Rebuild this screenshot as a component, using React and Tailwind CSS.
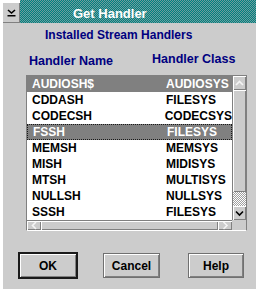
import React from 'react'

const handlers = [
  { name: 'AUDIOSH$', cls: 'AUDIOSYS', selected: true },
  { name: 'CDDASH', cls: 'FILESYS' },
  { name: 'CODECSH', cls: 'CODECSYS' },
  { name: 'FSSH', cls: 'FILESYS', selected: true, focused: true },
  { name: 'MEMSH', cls: 'MEMSYS' },
  { name: 'MISH', cls: 'MIDISYS' },
  { name: 'MTSH', cls: 'MULTISYS' },
  { name: 'NULLSH', cls: 'NULLSYS' },
  { name: 'SSSH', cls: 'FILESYS' },
]

const raised = 'bg-[#cccccc] shadow-[inset_1px_1px_0_#ffffff,inset_-1px_-1px_0_#808080]'

function Chevron({ dir, color = '#000' }) {
  const paths = {
    up: 'M1 5 L4.5 1.5 L8 5',
    down: 'M1 1.5 L4.5 5 L8 1.5',
    left: 'M5 1 L1.5 4.5 L5 8',
    right: 'M1.5 1 L5 4.5 L1.5 8',
  }
  const vertical = dir === 'up' || dir === 'down'
  return (
    <svg width={vertical ? 9 : 7} height={vertical ? 7 : 9} viewBox={vertical ? '0 0 9 7' : '0 0 7 9'}>
      <path d={paths[dir]} fill="none" stroke={color} strokeWidth="1.6" />
    </svg>
  )
}

function DialogButton({ children, width, isDefault }) {
  return (
    <button
      className={`${raised} ${width} flex items-center justify-center text-[12px] font-bold text-black leading-[14px] ${
        isDefault ? 'h-[27px] border-2 border-[#1a1a1a]' : 'h-[25px] border border-[#707070]'
      }`}
    >
      {children}
    </button>
  )
}

export default function App() {
  return (
    <div className="w-[261px] h-[296px] bg-white font-['Liberation_Sans',Arial,sans-serif]">
      <div className="ml-[3px] w-[253px] h-[289px] bg-[#cccccc] flex flex-col">
        {/* Title bar */}
        <div className="h-[23px] flex">
          <div className="w-[17px] flex flex-col bg-white">
            <div className="h-[3px]" />
            <div className="flex-1 bg-[#cccccc] border-b border-r border-[#808080] flex items-center justify-center">
              <svg width="9" height="8" viewBox="0 0 9 8">
                <path d="M1 1 L4.5 4 L8 1" fill="none" stroke="#000" strokeWidth="1.6" />
                <rect x="0.5" y="6" width="8" height="1.5" fill="#000" />
              </svg>
            </div>
          </div>
          <div className="flex-1 bg-[image:repeating-conic-gradient(#008080_0%_25%,#6f9d9d_0%_50%)] bg-[length:2px_2px] pl-[53px] pt-[6px]">
            <span className="text-white font-bold text-[13px] leading-[15px] block">Get Handler</span>
          </div>
        </div>

        {/* Body */}
        <div className="mt-[5px] ml-[42px] text-[#000080] font-bold text-[12px] leading-[14px]">
          Installed Stream Handlers
        </div>
        <div className="mt-[10px] flex items-start text-[#000080] font-bold text-[12.5px] leading-[14px]">
          <span className="ml-[26px] mt-[2px]">Handler Name</span>
          <span className="ml-[39px]">Handler Class</span>
        </div>

        {/* List box */}
        <div className="mt-[7px] ml-[23px] w-[221px] border-t border-l border-r border-[#808080] border-b border-b-white flex flex-col">
          <div className="flex h-[144px]">
            <div className="w-[205px] bg-white flex flex-col">
              {handlers.map((h) => (
                <div
                  key={h.name}
                  className={`h-[16px] flex items-center pl-[5px] text-[12px] font-bold leading-[14px] ${
                    h.selected ? 'bg-[#808080] text-white' : 'text-black'
                  } ${h.focused ? 'border border-dotted border-[#1a1a1a] pl-[4px]' : ''}`}
                >
                  <span className="w-[134px]">{h.name}</span>
                  <span>{h.cls}</span>
                </div>
              ))}
            </div>
            {/* Vertical scrollbar */}
            <div className="w-[14px] flex flex-col border-l border-[#808080]">
              <div className={`${raised} h-[14px] flex items-center justify-center`}>
                <Chevron dir="up" color="#f4f4f4" />
              </div>
              <div className={`${raised} h-[102px]`} />
              <div className="h-[14px] bg-[image:repeating-conic-gradient(#ffffff_0%_25%,#a0a0a0_0%_50%)] bg-[length:2px_2px]" />
              <div className={`${raised} h-[14px] flex items-center justify-center`}>
                <Chevron dir="down" />
              </div>
            </div>
          </div>
          {/* Horizontal scrollbar */}
          <div className="flex h-[10px]">
            <div className="w-[205px] flex border-t border-[#808080]">
              <div className={`${raised} w-[14px] flex items-center justify-center`}>
                <Chevron dir="left" color="#f4f4f4" />
              </div>
              <div className={`${raised} flex-1`} />
              <div className={`${raised} w-[14px] flex items-center justify-center`}>
                <Chevron dir="right" color="#f4f4f4" />
              </div>
            </div>
            <div className="flex-1 bg-[#cccccc]" />
          </div>
        </div>

        {/* Buttons */}
        <div className="mt-[21px] flex items-center">
          <div className="ml-[15px]">
            <DialogButton width="w-[60px]" isDefault>OK</DialogButton>
          </div>
          <div className="ml-[25px]">
            <DialogButton width="w-[57px]">Cancel</DialogButton>
          </div>
          <div className="ml-[28px]">
            <DialogButton width="w-[56px]">Help</DialogButton>
          </div>
        </div>
      </div>
    </div>
  )
}
